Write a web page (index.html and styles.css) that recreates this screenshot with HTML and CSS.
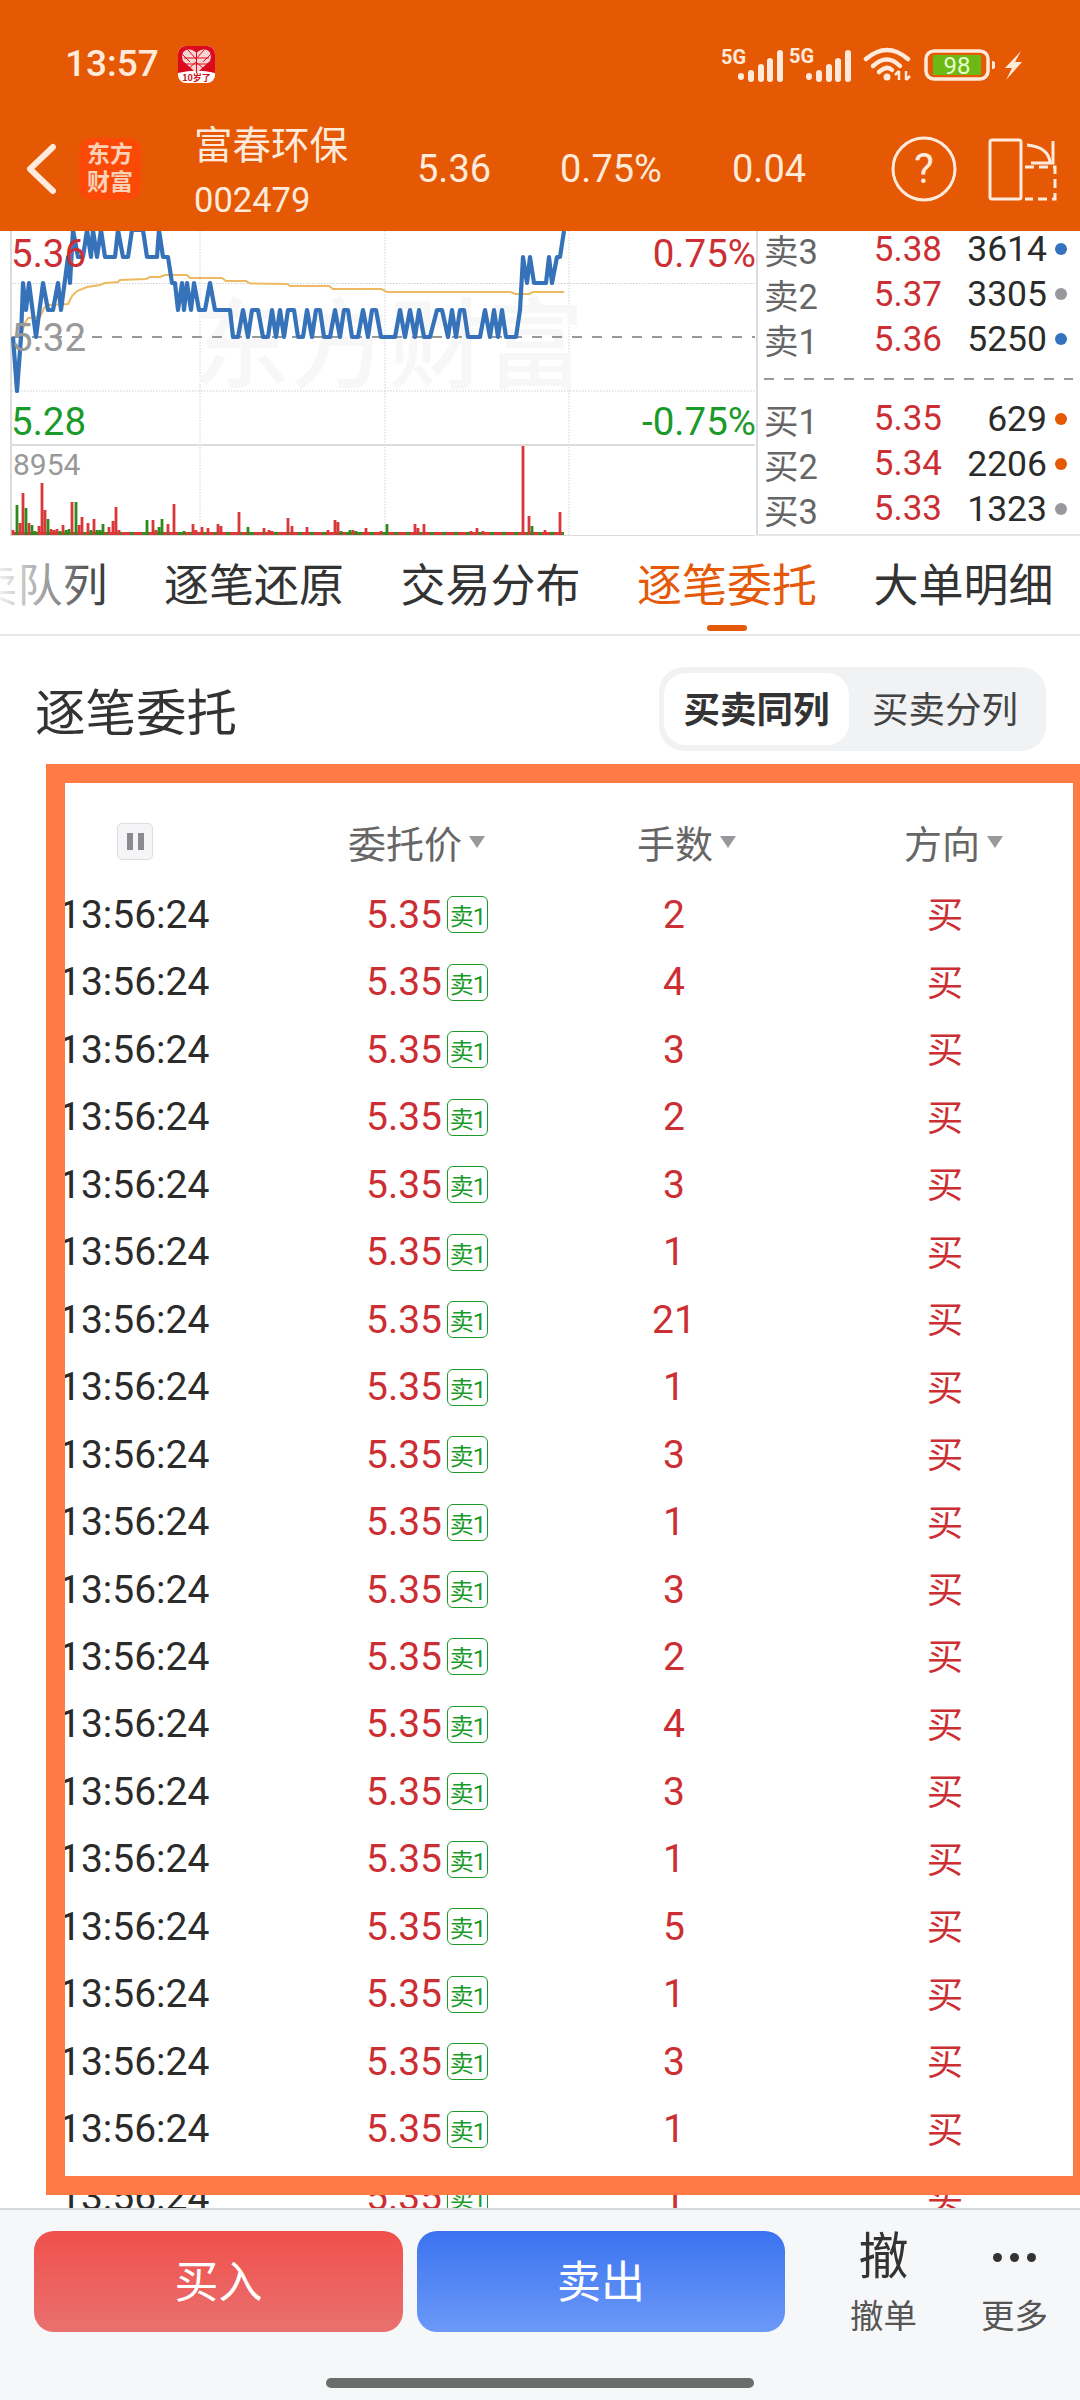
FILE: index.html
```html
<!DOCTYPE html>
<html lang="zh-CN">
<head>
<meta charset="utf-8">
<title>富春环保</title>
<link rel="stylesheet" href="styles.css">
</head>
<body>
<div class="page">
  <header class="topbar">
    <div class="status">
      <span class="clock">13:57</span>
      <svg class="appicon" viewBox="0 0 37 37" width="37" height="37">
        <rect width="37" height="37" rx="8" fill="#fff"/>
        <path d="M0 8a8 8 0 0 1 8-8h21a8 8 0 0 1 8 8v19q-18-5-37 0z" fill="#dc0a1e"/>
        <path d="M18.500 27 L5 15 Q2 7 8 4 Q14 2 18.500 7 Q23 2 29 4 Q35 7 32 15z" fill="#f8d5d5"/>
        <path d="M18.500 7v20M6 12h25M6 18h25M10 4l8 9l8-9M10 23l8-7l8 7M4 8l8 8M33 8l-8 8" stroke="#dc0a1e" stroke-width="1" fill="none"/>
        <text x="18.500" y="35" class="apptext">10岁了</text>
      </svg>
      <svg class="sysicons" viewBox="720 40 305 45" width="305" height="45">
        <text x="721" y="63" class="net">5G</text>
        <text x="789" y="62" class="net">5G</text>
        <g class="bars">
          <path d="M741 75v1M751 72v6M761 66v12M770 60v18M780 52v26"/>
          <path d="M809 75v1M819 72v6M829 66v12M838 60v18M848 52v26"/>
        </g>
        <g class="wifi">
          <path d="M866 58Q887 40 908 58"/>
          <path d="M873 65Q887 52 900 65"/>
          <path d="M879 71Q887 64 892 69"/>
          <circle cx="887" cy="76" r="3.500" class="wifidot"/>
          <path class="wifiarrows" d="M899 70v9M895 74l4-4M906 70v9M910 75l-4 4"/>
        </g>
        <rect x="926" y="50" width="62" height="28" rx="8" class="battery"/>
        <rect x="933" y="54" width="48" height="20" fill="#6cb814"/>
        <path d="M992 60q3 0 3 2v4q0 2-3 2z" class="nub"/>
        <text x="957" y="73" class="batt">98</text>
        <path d="M1021 50l-16 17h7l-6 12l16-18h-7z" class="nub"/>
      </svg>
    </div>
    <nav class="nav">
      <svg class="back" viewBox="0 0 32 52" width="32" height="52"><path d="M28 4L5 26l23 22"/></svg>
      <div class="logo"><span>东方</span><span>财富</span></div>
      <div class="stock"><div class="stock-name">富春环保</div><div class="stock-code">002479</div></div>
      <span class="quote q-price">5.36</span>
      <span class="quote q-pct">0.75%</span>
      <span class="quote">0.04</span>
      <svg class="navicons" viewBox="885 134 175 66" width="175" height="66">
        <circle cx="924" cy="167" r="31"/>
        <text x="924" y="181" class="help">?</text>
        <rect x="990" y="138" width="31" height="59" rx="2"/>
        <path d="M1027 143Q1048 145 1050 160M1053 139V161H1031"/>
        <path class="dash" d="M1025 165H1055V197H1025"/>
      </svg>
    </nav>
  </header>

  <section class="market">
    <div class="chart">
      <svg class="plot" viewBox="0 231 756 305" width="756" height="305">
        <path class="grid" d="M12 283.500H755M12 391H755M200 231V536M385 231V536M569 231V536"/>
        <path class="rule" d="M11 231V536M12 445H755M12 536H755"/>
        <text x="192" y="380" class="mark">东方财富</text>
        <path class="mid" d="M12 337H755"/>
        <polyline class="avg" points="20,338 25,323 28,318 40,317 44,308 48,305 68,304 72,296 77,291 87,287 100,285 105,283 118,282 120,280 146,279 150,277 160,277 165,275 187,275 190,278 222,278 226,281 246,281 250,283.500 287,284 290,286 329,286 333,289 381,289 387,292 510,292 516,294 529,294 533,292 564,292"/>
        <polyline class="price" points="13,337 17,391 21,337 23,283 26,310 29,283 36,337 43,283 48,310 53,310 58,283 61,310 68,257 70,283 73,230 78,257 83,257 87,230 91,257 93,230 97,257 101,230 105,257 115,257 118,230 123,257 128,257 132,230 143,230 147,257 157,257 159,230 163,257 168,257 172,283 175,283 178,310 182,283 184,310 187,283 191,310 194,283 199,310 205,310 210,283 215,310 230,310 233,337 238,337 243,310 248,337 252,310 258,310 263,337 268,337 272,310 276,337 280,310 284,337 288,310 294,310 298,337 303,337 307,310 312,337 316,310 320,310 324,337 330,337 335,310 340,337 344,310 348,310 352,337 358,337 363,310 368,337 372,310 376,310 381,337 388,337 395,337 400,310 405,337 410,310 415,337 419,310 424,337 430,337 437,310 442,310 448,337 452,310 456,337 460,310 464,310 468,337 474,337 480,337 485,310 490,337 494,310 498,337 502,310 506,337 512,337 516,337 520,310 523,257 527,283 530,257 534,283 546,283 549,257 552,283 557,257 560,257 564,231"/>
        <path class="vol-green" d="M12 533.500H564"/>
        <path class="vol-red-base" d="M14 533.500H564"/>
        <path class="vol-red" d="M13 535V530M20 535V523M23 535V493M29 535V523M39 535V526M42 535V483M45 535V510M51 535V529M54 535V530M57 535V529M63 535V525M72 535V502M79 535V525M82 535V517M88 535V523M94 535V519M109 535V527M113 535V521M116 535V507M119 535V530M153 535V520M156 535V530M168 535V524M174 535V504M193 535V524M196 535V530M202 535V527M208 535V528M218 535V524M221 535V526M239 535V512M264 535V528M269 535V530M272 535V531M288 535V518M292 535V526M307 535V527M328 535V530M335 535V520M338 535V522M353 535V530M366 535V528M381 535V531M415 535V524M418 535V528M424 535V524M471 535V531M477 535V528M483 535V531M523 535V446M529 535V516M545 535V530M560 535V512"/>
        <path class="vol-grn" d="M17 535V505M26 535V508M32 535V525M35 535V531M48 535V519M60 535V531M66 535V530M69 535V529M76 535V502M91 535V530M97 535V530M100 535V530M103 535V524M147 535V520M159 535V527M162 535V519M184 535V531M248 535V527M341 535V531M350 535V530M356 535V531M387 535V524M532 535V526"/>
      </svg>
      <span class="tag tag-high">5.36</span>
      <span class="tag tag-mid">5.32</span>
      <span class="tag tag-low">5.28</span>
      <span class="tag tag-vol">8954</span>
      <span class="tag tag-up">0.75%</span>
      <span class="tag tag-down">-0.75%</span>
    </div>
    <div class="book">
      <div class="book-group book-sell">
        <div class="book-row"><span class="lvl">卖3</span><span class="bp">5.38</span><span class="bq">3614</span><i class="dot d-blue"></i></div>
        <div class="book-row"><span class="lvl">卖2</span><span class="bp">5.37</span><span class="bq">3305</span><i class="dot d-gray"></i></div>
        <div class="book-row"><span class="lvl">卖1</span><span class="bp">5.36</span><span class="bq">5250</span><i class="dot d-blue"></i></div>
      </div>
      <div class="book-sep"></div>
      <div class="book-group">
        <div class="book-row"><span class="lvl">买1</span><span class="bp">5.35</span><span class="bq">629</span><i class="dot d-orange"></i></div>
        <div class="book-row"><span class="lvl">买2</span><span class="bp">5.34</span><span class="bq">2206</span><i class="dot d-orange"></i></div>
        <div class="book-row"><span class="lvl">买3</span><span class="bp">5.33</span><span class="bq">1323</span><i class="dot d-gray"></i></div>
      </div>
    </div>
  </section>

  <div class="tabs">
    <span class="tab">买卖队列</span>
    <span class="tab">逐笔还原</span>
    <span class="tab">交易分布</span>
    <span class="tab tab-active">逐笔委托</span>
    <span class="tab">大单明细</span>
  </div>

  <div class="title-row">
    <h1 class="title">逐笔委托</h1>
    <div class="segment"><span class="seg seg-on">买卖同列</span><span class="seg">买卖分列</span></div>
  </div>

  <div class="table">
    <div class="thead">
      <span class="pause"><i></i><i></i></span>
      <span class="th">委托价<i class="caret"></i></span>
      <span class="th">手数<i class="caret"></i></span>
      <span class="th">方向<i class="caret"></i></span>
    </div>
    <div class="tr"><span class="time">13:56:24</span><span class="px">5.35<b class="badge">卖1</b></span><span class="num">2</span><span class="num">买</span></div>
    <div class="tr"><span class="time">13:56:24</span><span class="px">5.35<b class="badge">卖1</b></span><span class="num">4</span><span class="num">买</span></div>
    <div class="tr"><span class="time">13:56:24</span><span class="px">5.35<b class="badge">卖1</b></span><span class="num">3</span><span class="num">买</span></div>
    <div class="tr"><span class="time">13:56:24</span><span class="px">5.35<b class="badge">卖1</b></span><span class="num">2</span><span class="num">买</span></div>
    <div class="tr"><span class="time">13:56:24</span><span class="px">5.35<b class="badge">卖1</b></span><span class="num">3</span><span class="num">买</span></div>
    <div class="tr"><span class="time">13:56:24</span><span class="px">5.35<b class="badge">卖1</b></span><span class="num">1</span><span class="num">买</span></div>
    <div class="tr"><span class="time">13:56:24</span><span class="px">5.35<b class="badge">卖1</b></span><span class="num">21</span><span class="num">买</span></div>
    <div class="tr"><span class="time">13:56:24</span><span class="px">5.35<b class="badge">卖1</b></span><span class="num">1</span><span class="num">买</span></div>
    <div class="tr"><span class="time">13:56:24</span><span class="px">5.35<b class="badge">卖1</b></span><span class="num">3</span><span class="num">买</span></div>
    <div class="tr"><span class="time">13:56:24</span><span class="px">5.35<b class="badge">卖1</b></span><span class="num">1</span><span class="num">买</span></div>
    <div class="tr"><span class="time">13:56:24</span><span class="px">5.35<b class="badge">卖1</b></span><span class="num">3</span><span class="num">买</span></div>
    <div class="tr"><span class="time">13:56:24</span><span class="px">5.35<b class="badge">卖1</b></span><span class="num">2</span><span class="num">买</span></div>
    <div class="tr"><span class="time">13:56:24</span><span class="px">5.35<b class="badge">卖1</b></span><span class="num">4</span><span class="num">买</span></div>
    <div class="tr"><span class="time">13:56:24</span><span class="px">5.35<b class="badge">卖1</b></span><span class="num">3</span><span class="num">买</span></div>
    <div class="tr"><span class="time">13:56:24</span><span class="px">5.35<b class="badge">卖1</b></span><span class="num">1</span><span class="num">买</span></div>
    <div class="tr"><span class="time">13:56:24</span><span class="px">5.35<b class="badge">卖1</b></span><span class="num">5</span><span class="num">买</span></div>
    <div class="tr"><span class="time">13:56:24</span><span class="px">5.35<b class="badge">卖1</b></span><span class="num">1</span><span class="num">买</span></div>
    <div class="tr"><span class="time">13:56:24</span><span class="px">5.35<b class="badge">卖1</b></span><span class="num">3</span><span class="num">买</span></div>
    <div class="tr"><span class="time">13:56:24</span><span class="px">5.35<b class="badge">卖1</b></span><span class="num">1</span><span class="num">买</span></div>
    <div class="tr"><span class="time">13:56:24</span><span class="px">5.35<b class="badge">卖1</b></span><span class="num">1</span><span class="num">买</span></div>
  </div>

  <footer class="dock">
    <div class="dock-row">
      <span class="btn btn-buy">买入</span>
      <span class="btn btn-sell">卖出</span>
      <div class="act"><span class="act-icon">撤</span><span class="act-label">撤单</span></div>
      <div class="act"><span class="act-icon"><i></i><i></i><i></i></span><span class="act-label">更多</span></div>
    </div>
    <div class="home"></div>
  </footer>

  <div class="frame"></div>
</div>
</body>
</html>
```
FILE: styles.css
```css
* { box-sizing: border-box; }
html, body { margin: 0; padding: 0; background: #fff; }
body { font-family: Roboto, "Noto Sans CJK SC", sans-serif; color: #333; }
i, b { font-style: normal; font-weight: 400; }

.page { position: relative; width: 1080px; height: 2400px; overflow: hidden; display: flex; flex-direction: column; background: #fff; }

/* top bar */
.topbar { height: 231px; flex: none; background: #e55804; color: #ffeadb; }
.status { height: 126px; display: flex; align-items: center; padding: 0 55px 0 65px; }
.clock { width: 93px; font-size: 37px; font-weight: 500; }
.appicon { margin-left: 20px; margin-top: 2px; }
.apptext { font: 700 9px "Noto Sans CJK SC", sans-serif; fill: #c8101c; text-anchor: middle; }
.sysicons { margin-left: auto; }
.net { font: 700 20px Roboto, sans-serif; fill: #ffeadb; }
.bars path { stroke: #ffeadb; stroke-width: 6; stroke-linecap: round; fill: none; }
.wifi path { stroke: #ffeadb; stroke-width: 4.500; fill: none; stroke-linecap: round; }
.wifi .wifiarrows { stroke-width: 2.500; stroke-linecap: butt; }
.wifidot { fill: #ffeadb; }
.battery { fill: none; stroke: #ffeadb; stroke-width: 3.500; }
.nub { fill: #ffeadb; }
.batt { font: 400 24px Roboto, sans-serif; fill: #e9ffd0; text-anchor: middle; }

.nav { height: 105px; display: flex; align-items: center; padding-bottom: 20px; }
.back { margin-left: 25px; flex: none; }
.back path { fill: none; stroke: #ffeadb; stroke-width: 6; stroke-linecap: round; stroke-linejoin: round; }
.logo { width: 62px; height: 62px; margin-left: 22px; flex: none; border-radius: 13px; background: #fb4a08; display: flex; flex-direction: column; align-items: center; justify-content: center; font-size: 23px; line-height: 28px; font-weight: 700; color: #fbd2b8; }
.stock { width: 223px; margin-left: 53px; margin-top: 9px; flex: none; }
.stock-name { font-size: 38.500px; line-height: 54px; white-space: nowrap; }
.stock-code { font-size: 34.500px; line-height: 54px; }
.quote { font-size: 38px; width: 143px; flex: none; white-space: nowrap; }
.q-pct { width: 172px; }
.navicons { margin-left: auto; margin-right: 20px; flex: none; }
.navicons circle, .navicons rect, .navicons path { fill: none; stroke: #ffeadb; stroke-width: 3; }
.navicons .dash { stroke-dasharray: 9 5; }
.help { font: 400 42px Roboto, sans-serif; fill: #ffeadb; text-anchor: middle; }

/* market */
.market { height: 305px; flex: none; display: flex; }
.chart { position: relative; width: 756px; height: 305px; flex: none; overflow: hidden; }
.plot { display: block; }
.grid { stroke: #d0d0d0; stroke-width: 1; stroke-dasharray: 1.500 1.500; fill: none; }
.rule { stroke: #dcdcdc; stroke-width: 2; fill: none; }
.mid { stroke: #999; stroke-width: 2; stroke-dasharray: 10 10; fill: none; }
.mark { font: 500 98px "Noto Sans CJK SC", sans-serif; fill: #f7f7f7; }
.avg { fill: none; stroke: #eeb960; stroke-width: 2; }
.price { fill: none; stroke: #3672b9; stroke-width: 4.200; stroke-linejoin: round; }
.vol-green { stroke: #3c8a1e; stroke-width: 3; fill: none; }
.vol-red-base { stroke: #d93a3a; stroke-width: 3; stroke-dasharray: 8 4; fill: none; }
.vol-red { stroke: #d8383a; stroke-width: 2.800; fill: none; }
.vol-grn { stroke: #2f8a1c; stroke-width: 2.800; fill: none; }

.tag { position: absolute; left: 11px; font-size: 38.500px; line-height: 44px; }
.tag-high { top: 1px; color: #cc2f33; }
.tag-mid { top: 85px; color: #999; }
.tag-low { top: 169px; color: #1a9a28; }
.tag-vol { top: 217px; left: 13px; font-size: 30px; line-height: 34px; color: #999; }
.tag-up { top: 1px; left: auto; right: 0; color: #cc2f33; }
.tag-down { top: 169px; left: auto; right: 0; color: #1a9a28; }

.book { flex: 1; border-left: 2px solid #dcdcdc; border-bottom: 2px solid #e6e6e6; overflow: hidden; }
.book-sell { margin-top: -7px; }
.book-row { height: 45.200px; display: grid; grid-template-columns: 65px 113px 105px 12px; align-items: center; padding-left: 6px; font-size: 35px; }
.lvl { color: #666; font-size: 34.500px; white-space: nowrap; }
.bp { color: #cc2f33; text-align: right; }
.bq { color: #2b2b2b; text-align: right; font-size: 35.500px; }
.dot { width: 12px; height: 12px; border-radius: 50%; margin-left: 8px; }
.d-blue { background: #3573be; }
.d-gray { background: #98989d; }
.d-orange { background: #e55804; }
.book-sep { height: 2px; width: 309px; margin: 18px 0 14px 6px; background: repeating-linear-gradient(90deg, #999 0 10px, transparent 10px 20px); }

/* tabs */
.tabs { position: relative; height: 100px; flex: none; display: flex; align-items: center; gap: 56.500px; padding: 4px 0 0; border-bottom: 2px solid #e8e8ea; overflow: hidden; }
.tabs::before { content: ""; position: absolute; left: 0; top: 0; bottom: 0; width: 108px; background: linear-gradient(90deg, rgba(255,255,255,.92), rgba(255,255,255,0)); z-index: 1; }
.tab { font-size: 45px; line-height: 60px; white-space: nowrap; color: #333; flex: none; }
.tab:first-child { margin-left: -72.500px; }
.tab-active { position: relative; align-self: stretch; display: flex; align-items: center; color: #e5590a; }
.tab-active::after { content: ""; position: absolute; left: 70px; bottom: 3px; width: 40px; height: 6px; border-radius: 3px; background: #e5590a; }

/* title */
.title-row { height: 145px; flex: none; display: flex; align-items: center; justify-content: space-between; padding: 0 34px 0 35px; }
.title { margin: 0; font-size: 50.500px; font-weight: 400; color: #333; }
.segment { width: 387px; height: 84px; border-radius: 25px; background: #f1f2f4; padding: 6px 5px; display: flex; align-items: center; }
.seg { flex: 1; height: 72px; padding-bottom: 3px; display: flex; align-items: center; justify-content: center; font-size: 36.500px; color: #444; }
.seg-on { flex: none; width: 185px; background: #fff; border-radius: 22px; font-weight: 700; color: #333; }

/* table */
.table { flex: 1; min-height: 0; overflow: hidden; }
.thead { height: 68px; margin: 26px 0 6.250px; padding-left: 117px; display: grid; grid-template-columns: 231px 289px 267px auto; align-items: center; }
.pause { width: 36px; height: 37px; border: 1px solid #dddde2; border-radius: 5px; background: #f5f5f8; display: flex; align-items: center; justify-content: center; gap: 5px; }
.pause i { width: 6px; height: 17px; background: #8a8a8f; }
.th { display: flex; align-items: center; font-size: 38px; color: #666; }
.caret { width: 0; height: 0; margin-left: 7px; margin-top: 2px; border-left: 8px solid transparent; border-right: 8px solid transparent; border-top: 12px solid #98989d; }
.tr { height: 67.460px; padding-left: 59px; display: grid; grid-template-columns: 307px 155px 306px 236px; align-items: center; font-size: 39px; }
.time { color: #2b2b2b; white-space: nowrap; }
.px { display: flex; align-items: center; color: #cc2f33; white-space: nowrap; }
.badge { width: 41px; height: 37px; margin-left: 5px; border: 1px solid #1a9a28; border-radius: 6px; display: flex; align-items: center; justify-content: center; font-size: 24px; letter-spacing: -1px; color: #1a9a28; }
.num { text-align: center; color: #cc2f33; }
.num:last-child { font-size: 36.500px; padding-bottom: 4px; }

/* dock */
.dock { height: 192px; flex: none; background: #f6f7f9; border-top: 2px solid #d6d9de; padding-top: 21px; }
.dock-row { display: flex; padding-left: 34px; }
.btn { width: 369px; height: 101px; padding-bottom: 5px; border-radius: 20px; display: flex; align-items: center; justify-content: center; font-size: 44px; color: #fff; flex: none; }
.btn-buy { background: linear-gradient(#f0504c, #e9716f); }
.btn-sell { width: 368px; margin-left: 14px; background: linear-gradient(#3b73f0, #6c99f8); margin-right: 33px; }
.act { width: 131px; flex: none; display: flex; flex-direction: column; align-items: center; }
.act-icon { height: 52px; font-size: 50px; line-height: 52px; color: #333; display: flex; align-items: center; gap: 8px; }
.act-icon i { width: 9px; height: 9px; border-radius: 50%; background: #333; }
.act-label { margin-top: 14px; font-size: 33.500px; line-height: 40px; color: #555; }
.home { width: 428px; height: 10px; margin: 41px 0 0 326px; border-radius: 5px; background: #6b6c6c; }

/* annotation frame lying over the table */
.frame { position: absolute; left: 46px; top: 764px; width: 1034px; height: 1431px; border: 19px solid #ff7a45; border-right-width: 7px; pointer-events: none; }
```
